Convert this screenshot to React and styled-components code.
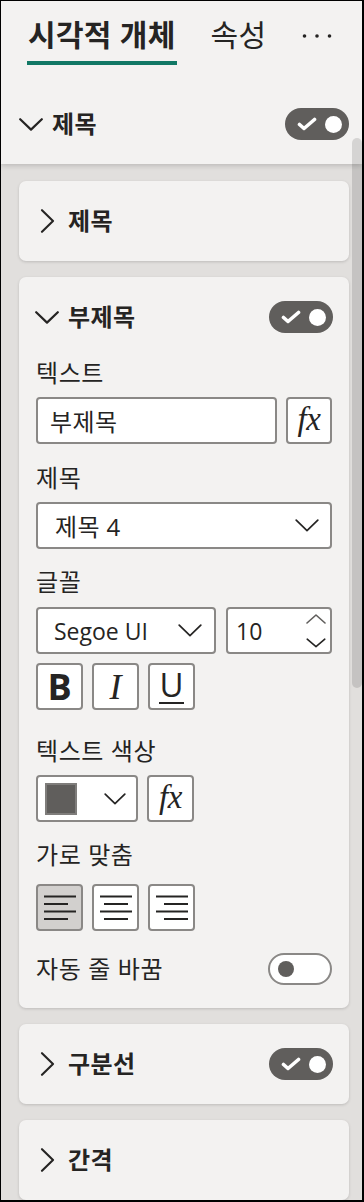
import React from "react";
import styled, { createGlobalStyle } from "styled-components";

const Global = createGlobalStyle`
  html, body { margin: 0; padding: 0; background: #ffffff; }
  * { box-sizing: border-box; }
  body { font-family: "Open Sans", "Noto Sans CJK KR", sans-serif; color: #252423; }
`;

const FONT = `"Open Sans", "Noto Sans CJK KR", sans-serif`;

const Frame = styled.div`
  position: relative;
  width: 364px;
  height: 1202px;
  border-style: solid;
  border-color: #000;
  border-width: 1px 2px 2px 1px;
  overflow: hidden;
  display: flex;
  flex-direction: column;
  background: #e1dfdd;
  font-family: ${FONT};
`;

const Header = styled.div`
  position: relative;
  z-index: 2;
  background: #f3f2f1;
  box-shadow: 0 2px 5px rgba(0, 0, 0, 0.16);
  display: flex;
  flex-direction: column;
  flex: none;
`;

const TabBar = styled.div`
  display: flex;
  align-items: flex-start;
  padding-left: 26px;
  height: 64px;
`;

const Tab = styled.div`
  display: flex;
  flex-direction: column;
  align-items: stretch;
  padding-top: 14px;
  margin-right: ${(p) => p.$mr || 0}px;
`;

const TabLabel = styled.div`
  font-size: 30px;
  line-height: 40px;
  letter-spacing: 0.3px;
  font-weight: ${(p) => (p.$active ? 700 : 400)};
  color: #252423;
  padding: 0 1px;
  white-space: nowrap;
`;

const TabLine = styled.div`
  margin-top: 6px;
  height: 4px;
  background: ${(p) => (p.$active ? "#117865" : "transparent")};
`;

const More = styled.div`
  margin-left: auto;
  margin-right: 30px;
  margin-top: 32px;
  display: flex;
`;

const SectionBar = styled.div`
  margin-top: 19px;
  height: 80px;
  display: flex;
  align-items: center;
  padding: 0 13px 0 18px;
`;

const Title = styled.div`
  font-size: 24px;
  font-weight: 700;
  letter-spacing: 0.4px;
  line-height: 30px;
  color: #252423;
  margin-left: 9px;
  white-space: nowrap;
`;

const Spacer = styled.div`
  flex: 1;
`;

const Scroll = styled.div`
  flex: 1;
  display: flex;
  flex-direction: column;
  gap: 16px;
  padding: 17px 13px 0 18px;
  overflow: hidden;
`;

const Card = styled.div`
  background: #f3f2f1;
  border-radius: 7px;
  box-shadow: 0 1px 3px rgba(0, 0, 0, 0.16);
  display: flex;
  flex-direction: column;
  flex: none;
`;

const CardHeader = styled.div`
  height: 80px;
  display: flex;
  align-items: center;
  padding: 0 16px;
`;

const ChevBox = styled.div`
  width: 24px;
  height: 24px;
  display: flex;
  align-items: center;
  justify-content: center;
  flex: none;
`;

const Content = styled.div`
  display: flex;
  flex-direction: column;
  padding: 1px 17px 23px 17px;
`;

const Label = styled.div`
  font-size: 24px;
  letter-spacing: 0.6px;
  line-height: 30px;
  color: #252423;
  margin-top: ${(p) => p.$mt || 0}px;
  margin-bottom: ${(p) => p.$mb ?? 9}px;
  white-space: nowrap;
`;

const Row = styled.div`
  display: flex;
  gap: ${(p) => p.$gap || 9}px;
  align-items: center;
  margin-top: ${(p) => p.$mt || 0}px;
`;

const Box = styled.div`
  height: 47px;
  width: ${(p) => (p.$w ? `${p.$w}px` : "auto")};
  flex: ${(p) => (p.$w ? "none" : p.$grow ? "1 1 auto" : "none")};
  background: #ffffff;
  border: 2px solid #8a8886;
  border-radius: 4px;
  display: flex;
  align-items: center;
  padding: 0 ${(p) => p.$pr ?? 12}px 0 ${(p) => p.$pl ?? 12}px;
  font-size: 24px;
  letter-spacing: 0.4px;
  color: #252423;
  white-space: nowrap;
`;

const IconBtn = styled.div`
  width: ${(p) => p.$w || 47}px;
  height: 47px;
  flex: none;
  background: ${(p) => (p.$sel ? "#d2d0ce" : "#ffffff")};
  border: 2px solid #8a8886;
  border-radius: 4px;
  display: flex;
  align-items: center;
  justify-content: center;
  color: #252423;
`;

const Fx = styled.span`
  font-family: "Liberation Serif", "DejaVu Serif", serif;
  font-style: italic;
  font-size: 33px;
  line-height: 1;
  margin-top: -3px;
  letter-spacing: -0.5px;
`;

const BoldB = styled.span`
  font-family: "Open Sans", sans-serif;
  font-weight: 700;
  font-size: 36px;
  line-height: 1;
`;

const ItalicI = styled.span`
  font-family: "Liberation Serif", serif;
  font-style: italic;
  font-size: 36px;
  line-height: 1;
`;

const UnderU = styled.span`
  font-family: "Open Sans", sans-serif;
  font-size: 33px;
  line-height: 28px;
  padding-bottom: 3px;
  border-bottom: 2px solid #252423;
  margin-top: 2px;
`;

const Value = styled.span`
  flex: 1;
  font-size: ${(p) => (p.$latin ? "23px" : "inherit")};
  letter-spacing: ${(p) => (p.$latin ? "0" : "inherit")};
`;

const Spin = styled.div`
  display: flex;
  flex-direction: column;
  gap: 14px;
  margin-right: -8px;
`;

const Swatch = styled.div`
  width: 32px;
  height: 32px;
  background: #605e5c;
  border: 2px solid #7f7d7b;
  margin-left: -3px;
`;

const ToggleOn = styled.div`
  width: 64px;
  height: 32px;
  border-radius: 16px;
  background: #605e5c;
  display: flex;
  align-items: center;
  justify-content: space-between;
  padding: 0 7px 0 12px;
  flex: none;
`;

const ToggleOff = styled.div`
  width: 64px;
  height: 32px;
  border-radius: 16px;
  background: #ffffff;
  border: 2px solid #8a8886;
  display: flex;
  align-items: center;
  padding-left: 8px;
  flex: none;
`;

const Knob = styled.div`
  width: ${(p) => p.$d || 17}px;
  height: ${(p) => p.$d || 17}px;
  border-radius: 50%;
  background: ${(p) => p.$c || "#ffffff"};
`;

const Thumb = styled.div`
  position: absolute;
  z-index: 3;
  right: 0;
  top: 137px;
  width: 10px;
  height: 550px;
  border-radius: 5px;
  background: rgba(0, 0, 0, 0.12);
`;

const ChevronDown = ({ w = 24, h = 13, sw = 2.2 }) => (
  <svg width={w} height={h} viewBox={`0 0 ${w} ${h}`} fill="none">
    <path d={`M1.2 1.2 L${w / 2} ${h - 1.4} L${w - 1.2} 1.2`} stroke="#252423" strokeWidth={sw} strokeLinecap="round" strokeLinejoin="round" />
  </svg>
);

const ChevronUp = ({ w = 20, h = 10, sw = 1.6 }) => (
  <svg width={w} height={h} viewBox={`0 0 ${w} ${h}`} fill="none">
    <path d={`M1 ${h - 1} L${w / 2} 1 L${w - 1} ${h - 1}`} stroke="#605e5c" strokeWidth={sw} strokeLinecap="round" strokeLinejoin="round" />
  </svg>
);

const ChevronRight = () => (
  <svg width="15" height="24" viewBox="0 0 15 24" fill="none">
    <path d="M2 1.2 L13 12 L2 22.8" stroke="#252423" strokeWidth="2.1" strokeLinecap="round" strokeLinejoin="round" />
  </svg>
);

const Check = () => (
  <svg width="20" height="14" viewBox="0 0 20 14" fill="none">
    <path d="M2.5 7.5 L7 11.5 L17.5 2.5" stroke="#ffffff" strokeWidth="3.6" strokeLinecap="round" strokeLinejoin="round" />
  </svg>
);

const Dots = () => (
  <svg width="30" height="6" viewBox="0 0 30 6">
    <circle cx="2.5" cy="3" r="1.8" fill="#252423" />
    <circle cx="15" cy="3" r="1.8" fill="#252423" />
    <circle cx="27.5" cy="3" r="1.8" fill="#252423" />
  </svg>
);

const Align = ({ kind }) => {
  const full = [0, 32];
  const short = kind === "left" ? [0, 24] : kind === "right" ? [8, 32] : [4, 28];
  const lines = [full, short, full, short];
  return (
    <svg width="32" height="26" viewBox="0 0 32 26" fill="none">
      {lines.map((l, i) => (
        <line key={i} x1={l[0]} x2={l[1]} y1={1.5 + i * 7.5} y2={1.5 + i * 7.5} stroke="#252423" strokeWidth="2" />
      ))}
    </svg>
  );
};

const OnToggle = () => (
  <ToggleOn>
    <Check />
    <Knob />
  </ToggleOn>
);

export default function App() {
  return (
    <>
      <Global />
      <Frame>
        <Header>
          <TabBar>
            <Tab $mr={33}>
              <TabLabel $active>시각적 개체</TabLabel>
              <TabLine $active />
            </Tab>
            <Tab>
              <TabLabel>속성</TabLabel>
              <TabLine />
            </Tab>
            <More>
              <Dots />
            </More>
          </TabBar>
          <SectionBar>
            <ChevBox>
              <ChevronDown />
            </ChevBox>
            <Title>제목</Title>
            <Spacer />
            <OnToggle />
          </SectionBar>
        </Header>

        <Scroll>
          <Card>
            <CardHeader>
              <ChevBox>
                <ChevronRight />
              </ChevBox>
              <Title>제목</Title>
            </CardHeader>
          </Card>

          <Card>
            <CardHeader>
              <ChevBox>
                <ChevronDown />
              </ChevBox>
              <Title>부제목</Title>
              <Spacer />
              <OnToggle />
            </CardHeader>
            <Content>
              <Label>텍스트</Label>
              <Row>
                <Box $grow $pl={12}>부제목</Box>
                <IconBtn $w={46}>
                  <Fx>fx</Fx>
                </IconBtn>
              </Row>

              <Label $mt={19}>제목</Label>
              <Box $pl={17} $pr={11}>
                <Value>제목 4</Value>
                <ChevronDown w={24} h={13} sw={1.7} />
              </Box>

              <Label $mt={18} $mb={10}>글꼴</Label>
              <Row $gap={10}>
                <Box $grow $pl={16} $pr={12}>
                  <Value $latin>Segoe UI</Value>
                  <ChevronDown w={24} h={13} sw={1.7} />
                </Box>
                <Box $w={106} $pl={8} $pr={12}>
                  <Value $latin>10</Value>
                  <Spin>
                    <ChevronUp />
                    <ChevronDown w={20} h={10} sw={1.6} />
                  </Spin>
                </Box>
              </Row>
              <Row $mt={9}>
                <IconBtn>
                  <BoldB>B</BoldB>
                </IconBtn>
                <IconBtn>
                  <ItalicI>I</ItalicI>
                </IconBtn>
                <IconBtn>
                  <UnderU>U</UnderU>
                </IconBtn>
              </Row>

              <Label $mt={26}>텍스트 색상</Label>
              <Row>
                <Box $w={102} $pl={10} $pr={10}>
                  <Swatch />
                  <Spacer />
                  <ChevronDown w={22} h={12} sw={1.7} />
                </Box>
                <IconBtn>
                  <Fx>fx</Fx>
                </IconBtn>
              </Row>

              <Label $mt={18} $mb={14}>가로 맞춤</Label>
              <Row>
                <IconBtn $sel>
                  <Align kind="left" />
                </IconBtn>
                <IconBtn>
                  <Align kind="center" />
                </IconBtn>
                <IconBtn>
                  <Align kind="right" />
                </IconBtn>
              </Row>

              <Row $mt={22}>
                <Label $mb={0}>자동 줄 바꿈</Label>
                <Spacer />
                <ToggleOff>
                  <Knob $d={16} $c="#605e5c" />
                </ToggleOff>
              </Row>
            </Content>
          </Card>

          <Card>
            <CardHeader>
              <ChevBox>
                <ChevronRight />
              </ChevBox>
              <Title>구분선</Title>
              <Spacer />
              <OnToggle />
            </CardHeader>
          </Card>

          <Card>
            <CardHeader>
              <ChevBox>
                <ChevronRight />
              </ChevBox>
              <Title>간격</Title>
            </CardHeader>
          </Card>
        </Scroll>
        <Thumb />
      </Frame>
    </>
  );
}
